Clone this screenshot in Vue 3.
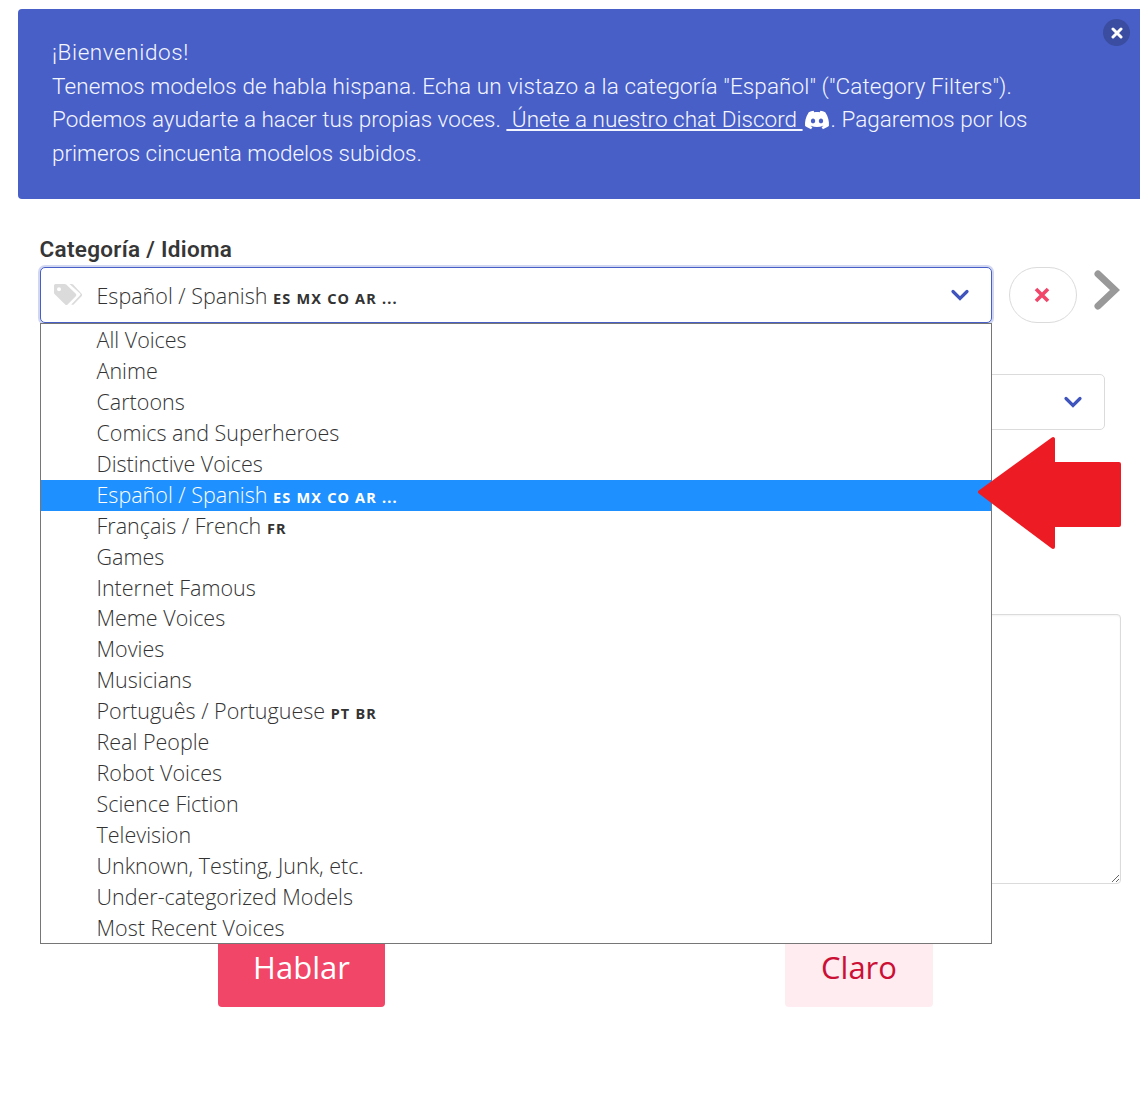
<script setup>
const options = [
  { name: 'All Voices' },
  { name: 'Anime' },
  { name: 'Cartoons' },
  { name: 'Comics and Superheroes' },
  { name: 'Distinctive Voices' },
  { name: 'Español / Spanish', tag: 'ES MX CO AR ...', active: true },
  { name: 'Français / French', tag: 'FR' },
  { name: 'Games' },
  { name: 'Internet Famous' },
  { name: 'Meme Voices' },
  { name: 'Movies' },
  { name: 'Musicians' },
  { name: 'Português / Portuguese', tag: 'PT BR' },
  { name: 'Real People' },
  { name: 'Robot Voices' },
  { name: 'Science Fiction' },
  { name: 'Television' },
  { name: 'Unknown, Testing, Junk, etc.' },
  { name: 'Under-categorized Models' },
  { name: 'Most Recent Voices' }
]
</script>

<template>
  <div class="page">
    <section class="banner">
      <button class="close" aria-label="Cerrar">
        <svg width="12" height="12" viewBox="0 0 12 12"><path d="M2 2l8 8M10 2l-8 8" stroke="#fff" stroke-width="3" stroke-linecap="round" /></svg>
      </button>
      <p class="wide-title">¡Bienvenidos!</p>
      <p class="wide-line">Tenemos modelos de habla hispana. Echa un vistazo a la categoría "Español" ("Category Filters").</p>
      <p>Podemos ayudarte a hacer tus propias voces. <a class="link"> Únete a nuestro chat Discord </a><svg class="discord" width="28" height="24" viewBox="0 0 24 24"><path fill="#fff" d="M20.317 4.3698a19.7913 19.7913 0 00-4.8851-1.5152.0741.0741 0 00-.0785.0371c-.211.3753-.4447.8648-.6083 1.2495-1.8447-.2762-3.68-.2762-5.4868 0-.1636-.3933-.4058-.8742-.6177-1.2495a.077.077 0 00-.0785-.037 19.7363 19.7363 0 00-4.8852 1.515.0699.0699 0 00-.0321.0277C.5334 9.0458-.319 13.5799.0992 18.0578a.0824.0824 0 00.0312.0561c2.0528 1.5076 4.0413 2.4228 5.9929 3.0294a.0777.0777 0 00.0842-.0276c.4616-.6304.8731-1.2952 1.226-1.9942a.076.076 0 00-.0416-.1057c-.6528-.2476-1.2743-.5495-1.8722-.8923a.077.077 0 01-.0076-.1277c.1258-.0943.2517-.1923.3718-.2914a.0743.0743 0 01.0776-.0105c3.9278 1.7933 8.18 1.7933 12.0614 0a.0739.0739 0 01.0785.0095c.1202.099.246.1981.3728.2924a.077.077 0 01-.0066.1276 12.2986 12.2986 0 01-1.873.8914.0766.0766 0 00-.0407.1067c.3604.698.7719 1.3628 1.225 1.9932a.076.076 0 00.0842.0286c1.961-.6067 3.9495-1.5219 6.0023-3.0294a.077.077 0 00.0313-.0552c.5004-5.177-.8382-9.6739-3.5485-13.6604a.061.061 0 00-.0312-.0286zM8.02 15.3312c-1.1825 0-2.1569-1.0857-2.1569-2.419 0-1.3332.9555-2.4189 2.157-2.4189 1.2108 0 2.1757 1.0952 2.1568 2.419 0 1.3332-.9555 2.4189-2.1569 2.4189zm7.9748 0c-1.1825 0-2.1569-1.0857-2.1569-2.419 0-1.3332.9554-2.4189 2.1569-2.4189 1.2108 0 2.1757 1.0952 2.1568 2.419 0 1.3332-.946 2.4189-2.1568 2.4189Z" /></svg>. Pagaremos por los</p>
      <p>primeros cincuenta modelos subidos.</p>
    </section>

    <section class="form">
      <label class="label">Categoría / Idioma</label>
      <div class="row">
        <div class="select-wrap">
          <div class="select focused">
            <svg class="tag" width="30" height="24" viewBox="0 0 30 24"><path fill="#dbdbdb" d="M1 2.5A1.5 1.5 0 012.5 1h9.2c.6 0 1.1.2 1.5.6l9.6 9.2c.7.7.7 1.7 0 2.4l-8.2 8.2c-.7.7-1.7.7-2.4 0L2 11.6c-.6-.4-1-1-1-1.6zM6 4.2a2 2 0 100 4 2 2 0 000-4z" /><path fill="#dbdbdb" d="M16.5 1h2.2c.6 0 1.1.2 1.5.6l8.4 9.2c.7.7.7 1.7 0 2.4l-8 8.2c-.6.6-1.6.6-2.3 0l9-9.4c.3-.4.3-.9 0-1.2z" /></svg>
            <span class="value">Español / Spanish <b class="code">ES MX CO AR ...</b></span>
            <svg class="chevron" width="20" height="14" viewBox="0 0 20 14"><path d="M3 3.5l7 7 7-7" fill="none" stroke="#3f55bd" stroke-width="3.2" stroke-linecap="round" /></svg>
          </div>
          <ul class="menu">
            <li v-for="o in options" :key="o.name" :class="{ active: o.active }">{{ o.name }} <b v-if="o.tag" class="code">{{ o.tag }}</b></li>
          </ul>
        </div>
        <button class="clear" aria-label="Borrar">
          <svg width="20" height="20" viewBox="0 0 20 20"><path d="M4 4l12 12M16 4L4 16" stroke="#f1456a" stroke-width="3.6" /></svg>
        </button>
        <svg class="next" width="26" height="40" viewBox="0 0 26 40"><path d="M4 4l17 16L4 36" fill="none" stroke="#999" stroke-width="7" stroke-linejoin="miter" stroke-linecap="round" /></svg>
      </div>

      <div class="select second">
        <svg class="chevron" width="20" height="14" viewBox="0 0 20 14"><path d="M3 3.5l7 7 7-7" fill="none" stroke="#3f55bd" stroke-width="3.2" stroke-linecap="round" /></svg>
      </div>

      <textarea class="text"></textarea>

      <div class="actions">
        <button class="speak">Hablar</button>
        <button class="reset">Claro</button>
      </div>
    </section>

    <svg class="arrow" width="146" height="114" viewBox="0 0 146 114"><path fill="#ed1c24" stroke="#ed1c24" stroke-width="4" stroke-linejoin="round" d="M3 56L76 3v25h66v61H76v22z" /></svg>
  </div>
</template>

<style>
html, body { margin: 0; background: #fff; }
</style>

<style scoped>
.page {
  position: relative;
  width: 1140px;
  height: 1112px;
  overflow: hidden;
  font-family: "Open Sans", "Noto Sans", sans-serif;
  color: #4a4a4a;
}
.banner {
  position: relative;
  box-sizing: border-box;
  height: 190px;
  margin: 9px 0 0 18px;
  padding: 27px 34px 0;
  background: #485fc7;
  border-radius: 4px 0 0 4px;
  color: #f4f6ff;
  font-family: "Roboto", sans-serif;
  font-weight: 300;
  font-size: 22.5px;
  line-height: 33.7px;
}
.banner p { margin: 0; white-space: pre-wrap; }
.banner .wide-title { letter-spacing: .6px; }
.banner .wide-line { letter-spacing: .11px; }
.link { text-decoration: underline; }
.discord { vertical-align: -5px; }
.close {
  position: absolute;
  top: 10px;
  right: 10px;
  display: flex;
  align-items: center;
  justify-content: center;
  width: 27px;
  height: 27px;
  padding: 0;
  border: 0;
  border-radius: 50%;
  background: #3a4da1;
}
.form { padding: 36px 0 0 39.5px; }
.label {
  display: block;
  height: 32px;
  color: #363636;
  font-family: "Roboto", sans-serif;
  font-weight: 600;
  font-size: 22.5px;
  letter-spacing: .3px;
  line-height: 29px;
}
.row { display: flex; align-items: flex-start; }
.select-wrap { position: relative; width: 952.5px; }
.select {
  box-sizing: border-box;
  display: flex;
  align-items: center;
  height: 56px;
  background: #fff;
  border: 1px solid #dbdbdb;
  border-radius: 5px;
}
.select.focused {
  border-color: #485fc7;
  box-shadow: 0 0 0 2px rgba(72, 95, 199, .25);
}
.tag { margin-left: 12px; flex: none; }
.value {
  margin-left: 14px;
  flex: 1;
  font-size: 21.5px;
  font-weight: 300;
  color: #333;
}
.code {
  font-family: "Noto Sans", sans-serif;
  font-weight: 700;
  font-size: 14.5px;
  letter-spacing: 1.2px;
}
.select .chevron { flex: none; margin-right: 21px; }
.menu {
  position: absolute;
  z-index: 2;
  top: 56px;
  left: 0;
  right: 0;
  box-sizing: border-box;
  height: 621px;
  margin: 0;
  padding: 1px 0 0;
  list-style: none;
  background: #fff;
  border: 1px solid #767676;
  font-size: 21.5px;
  font-weight: 300;
  color: #333;
}
.menu li {
  height: 30.95px;
  line-height: 30.95px;
  padding-left: 56px;
  white-space: nowrap;
}
.menu li.active { background: #1e90ff; color: #fff; }
.clear {
  display: flex;
  align-items: center;
  justify-content: center;
  width: 68px;
  height: 56px;
  margin-left: 17px;
  padding: 0 2px 0 0;
  background: #fff;
  border: 1px solid #dbdbdb;
  border-radius: 28px;
}
.next { margin: 3px 0 0 17px; flex: none; }
.second {
  justify-content: flex-end;
  width: 1065.5px;
  margin-top: 51px;
}
.second .chevron { margin-right: 21px; }
.text {
  display: block;
  box-sizing: border-box;
  width: 1081.5px;
  height: 270px;
  margin: 184px 0 0;
  background: #fff;
  border: 1px solid #dbdbdb;
  border-radius: 4px;
  box-shadow: inset 0 1px 2px rgba(10, 10, 10, .05);
}
.actions { display: flex; margin: 41px 0 0 178.5px; }
.actions button {
  height: 82px;
  padding: 2px 0 0;
  border: 0;
  border-radius: 4px;
  font-family: "Open Sans", sans-serif;
  font-size: 31px;
}
.speak { width: 167px; background: #f14668; color: #fff; }
.reset { width: 148px; margin-left: 400px; background: #feecf0; color: #cc0f35; }
.arrow { position: absolute; z-index: 3; left: 977px; top: 436px; }
</style>
